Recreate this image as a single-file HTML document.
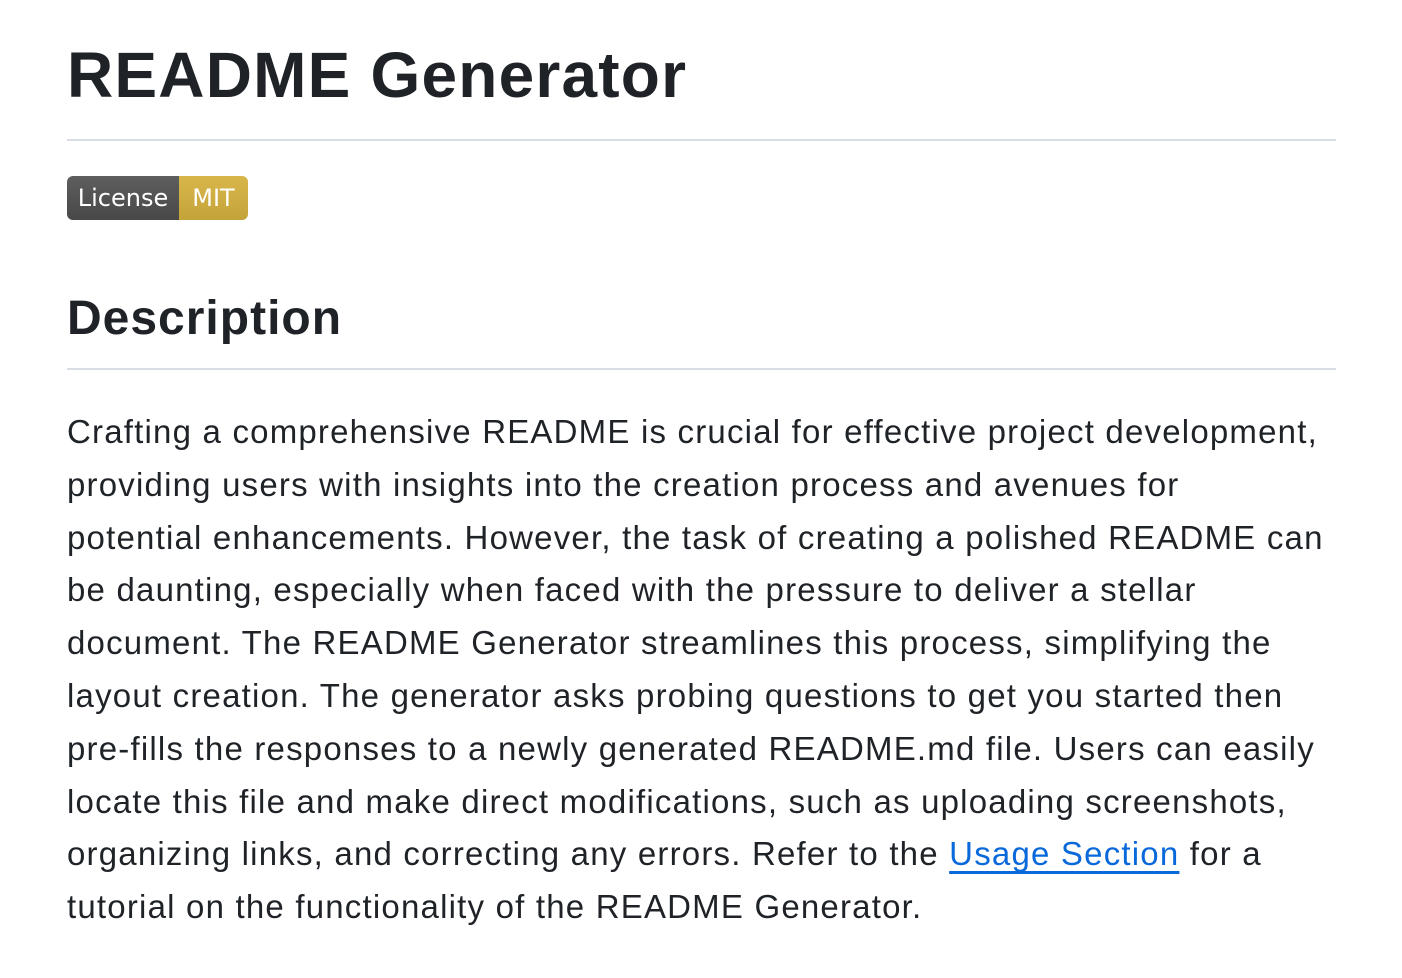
<!DOCTYPE html>
<html><head><meta charset="utf-8"><style>
body{margin:0;background:#fff;color:#1f2328;font-family:"Liberation Sans",sans-serif;width:1402px;height:978px;overflow:hidden;position:relative}
h1{position:absolute;left:67px;top:30px;margin:0;font-size:64px;font-weight:bold;line-height:90px;letter-spacing:1.2px}
h2{position:absolute;left:67px;top:286px;margin:0;font-size:48px;font-weight:bold;line-height:66px;letter-spacing:1px}
.hr{position:absolute;left:67px;width:1269px;height:2px;background:#d8dee4}
.badge{position:absolute;left:67px;top:176px;height:44px;width:181px;border-radius:6px;overflow:hidden;display:flex;font-size:24px;color:#fff;font-family:"DejaVu Sans",sans-serif;line-height:44px}
.badge span{display:block;text-align:center}
p{position:absolute;left:67px;top:406px;margin:0;font-size:33px;line-height:52.8px;white-space:pre;letter-spacing:1.2px}
a{color:#0969da;text-decoration:underline;text-underline-offset:6px}
</style></head><body>
<h1>README Generator</h1>
<div class="hr" style="top:139px"></div>
<div class="badge"><span style="background:linear-gradient(#5e5e5e,#484848);width:112px">License</span><span style="background:linear-gradient(#d8b64a,#c4a43a);width:69px">MIT</span></div>
<h2>Description</h2>
<div class="hr" style="top:368px"></div>
<p>Crafting a comprehensive README is crucial for effective project development,
providing users with insights into the creation process and avenues for
potential enhancements. However, the task of creating a polished README can
be daunting, especially when faced with the pressure to deliver a stellar
document. The README Generator streamlines this process, simplifying the
layout creation. The generator asks probing questions to get you started then
pre-fills the responses to a newly generated README.md file. Users can easily
locate this file and make direct modifications, such as uploading screenshots,
organizing links, and correcting any errors. Refer to the <a>Usage Section</a> for a
tutorial on the functionality of the README Generator.</p>
</body></html>
